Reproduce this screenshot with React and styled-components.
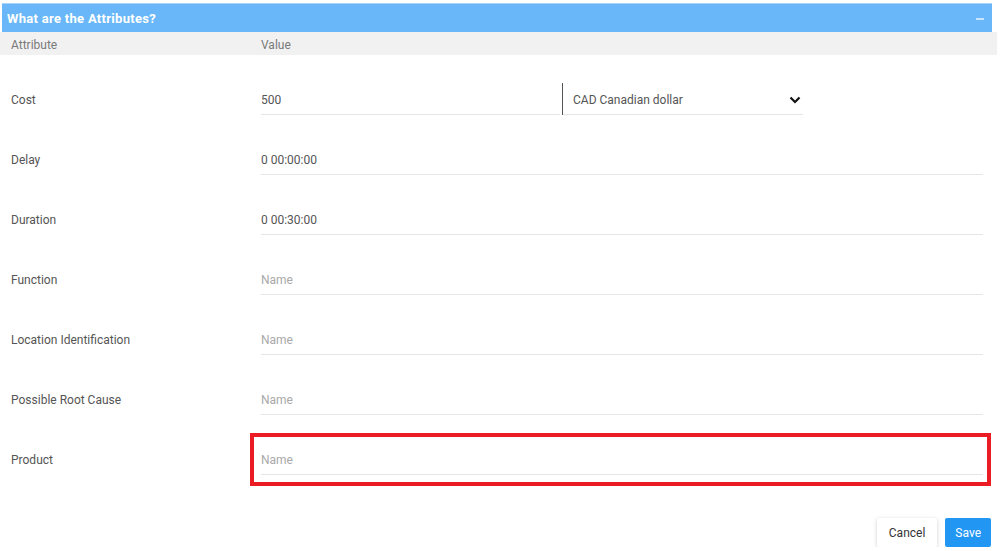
import React from "react";
import styled, { createGlobalStyle } from "styled-components";

const GlobalStyle = createGlobalStyle`
  body {
    margin: 0;
    background: #fff;
    font-family: Roboto, "Liberation Sans", Arial, sans-serif;
  }
`;

const Panel = styled.div`
  width: 997px;
  padding-top: 3px;
`;

const Header = styled.div`
  margin: 0 5px 0 2px;
  height: 28px;
  border-top: 1px solid #a6d4fb;
  background: #69b7f8;
  display: flex;
  align-items: center;
  justify-content: space-between;
  padding: 0 8px 0 5px;
  color: #fff;
  font-size: 13px;
  letter-spacing: 0.3px;
  font-weight: 700;
`;

const Minus = styled.span`
  width: 8px;
  height: 2px;
  background: #c9e5fd;
  margin-top: 2px;
`;

const ColumnHead = styled.div`
  height: 23px;
  box-sizing: border-box;
  padding-top: 2px;
  background: #f1f1f1;
  display: grid;
  grid-template-columns: 250px 1fr;
  align-items: center;
  padding-left: 11px;
  color: #7a7a7a;
  font-size: 12px;
`;

const Rows = styled.div`
  margin-top: 14px;
  width: 983px;
`;

const Row = styled.div`
  display: grid;
  grid-template-columns: 250px 1fr;
  align-items: center;
  padding: 14px 0 14px 11px;
`;

const Label = styled.div`
  color: #555;
  font-size: 12px;
  padding-top: 2px;
`;

const Value = styled.div`
  position: relative;
  display: flex;
  gap: 2px;
  &::after {
    content: "";
    display: ${(p) => (p.$highlight ? "block" : "none")};
    position: absolute;
    top: -10px;
    bottom: -11px;
    left: -11px;
    right: -8px;
    border: 4px solid #ec1c24;
    pointer-events: none;
  }
`;

const Input = styled.div`
  flex: ${(p) => (p.$width ? `0 0 ${p.$width}px` : "1")};
  height: 31px;
  box-sizing: border-box;
  padding-top: 2px;
  border-bottom: 1px solid #e6e6e6;
  display: flex;
  align-items: center;
  font-size: 12px;
  color: ${(p) => (p.$placeholder ? "#a9a9a9" : "#555")};
  height: 32px;
`;

const Select = styled.div`
  flex: 0 0 241px;
  height: 32px;
  border-bottom: 1px solid #e6e6e6;
  display: flex;
  align-items: center;
  justify-content: space-between;
  padding: 2px 2px 0 11px;
  box-sizing: border-box;
  font-size: 12px;
  color: #555;
  position: relative;
  &::before {
    content: "";
    position: absolute;
    left: 0;
    top: 0;
    bottom: -1px;
    width: 1px;
    background: #555;
  }
`;

const Footer = styled.div`
  display: flex;
  justify-content: flex-end;
  gap: 8px;
  width: 991px;
  margin-top: 29px;
`;

const Button = styled.button`
  height: 29px;
  border: none;
  border-radius: 2px;
  padding: 0 ${(p) => (p.$primary ? "10px" : "12px")};
  font-family: inherit;
  font-size: 12px;
  cursor: pointer;
  background: ${(p) => (p.$primary ? "#2196f3" : "#fff")};
  color: ${(p) => (p.$primary ? "#fff" : "#333")};
  box-shadow: ${(p) =>
    p.$primary ? "none" : "0 1px 4px rgba(0, 0, 0, 0.18)"};
`;

const Chevron = () => (
  <svg width="12" height="8" viewBox="0 0 12 8">
    <polyline
      points="1.5,1.5 6,6 10.5,1.5"
      fill="none"
      stroke="#111"
      strokeWidth="2.2"
    />
  </svg>
);

const fields = [
  { label: "Delay", value: "0 00:00:00" },
  { label: "Duration", value: "0 00:30:00" },
  { label: "Function" },
  { label: "Location Identification" },
  { label: "Possible Root Cause" },
  { label: "Product", highlight: true },
];

const App = () => {
  return (
    <>
      <GlobalStyle />
      <Panel>
        <Header>
          <span>What are the Attributes?</span>
          <Minus />
        </Header>
        <ColumnHead>
          <span>Attribute</span>
          <span>Value</span>
        </ColumnHead>
        <Rows>
          <Row>
            <Label>Cost</Label>
            <Value>
              <Input $width={299}>500</Input>
              <Select>
                <span>CAD Canadian dollar</span>
                <Chevron />
              </Select>
            </Value>
          </Row>
          {fields.map((f) => (
            <Row key={f.label}>
              <Label>{f.label}</Label>
              <Value $highlight={f.highlight}>
                <Input $placeholder={!f.value}>{f.value || "Name"}</Input>
              </Value>
            </Row>
          ))}
        </Rows>
        <Footer>
          <Button>Cancel</Button>
          <Button $primary>Save</Button>
        </Footer>
      </Panel>
    </>
  );
};

export default App;
